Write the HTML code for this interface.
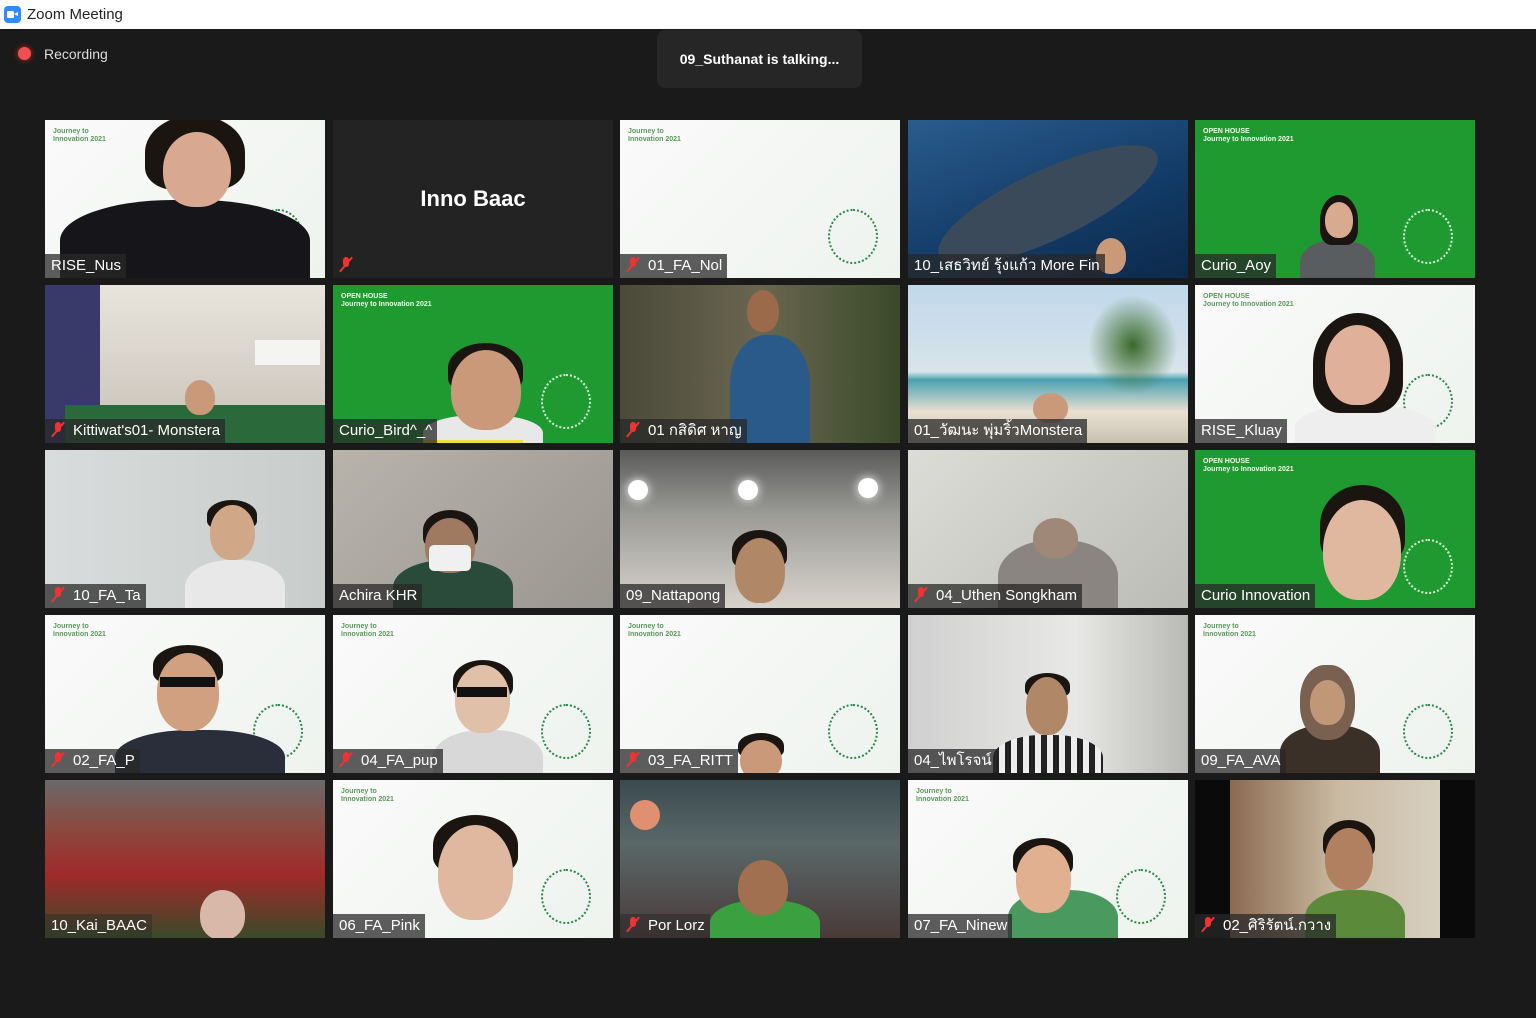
<!DOCTYPE html>
<html><head><meta charset="utf-8"><style>
*{margin:0;padding:0;box-sizing:border-box}
body{width:1536px;height:1018px;background:#1a1a1a;font-family:"Liberation Sans","Noto Sans CJK SC",sans-serif;position:relative;overflow:hidden}
.title{position:absolute;left:0;top:0;width:1536px;height:29px;background:#fff;color:#222;font-size:15px}
.title .ic{position:absolute;left:4px;top:6px;width:17px;height:17px;border-radius:4px;background:#2d8cff}
.title .ic:before{content:"";position:absolute;left:3px;top:5px;width:7px;height:7px;background:#fff;border-radius:1px}
.title .ic:after{content:"";position:absolute;left:10px;top:6px;border-right:4px solid #fff;border-top:2.5px solid transparent;border-bottom:2.5px solid transparent;height:0}
.title span{position:absolute;left:27px;top:6px}
.rec{position:absolute;left:18px;top:47px;width:13px;height:13px;border-radius:50%;background:#f05050;box-shadow:0 0 6px #c03020}
.rect{position:absolute;left:44px;top:46px;color:#ddd;font-size:14px}
.talk{position:absolute;left:657px;top:30px;width:205px;height:58px;background:#262626;border-radius:8px;color:#fff;font-weight:bold;font-size:14px;text-align:center;line-height:58px}
.t{position:absolute;width:280px;height:158px;overflow:hidden}
.w{background:linear-gradient(135deg,#fafafa,#eef3ee)}
.g{background:#1f9a30}
.lb{position:absolute;left:0;bottom:0;height:24px;background:rgba(40,40,40,.75);color:#fff;font-size:15px;line-height:24px;padding:0 5px 0 6px;white-space:nowrap}
.m{display:inline-block;width:14px;height:16px;position:relative;vertical-align:-2px;margin-right:8px}
.m:before{content:"";position:absolute;left:4px;top:1px;width:6px;height:10px;border-radius:3px;background:#e33}
.m:after{content:"";position:absolute;left:6px;top:-1px;width:2px;height:19px;background:#e33;transform:rotate(40deg)}
.hd{position:absolute;border-radius:50% 50% 45% 45%;background:#c9997a}
.hr{position:absolute;border-radius:50% 50% 30% 30%;background:#1b1512}
.bd{position:absolute;border-radius:45% 45% 0 0}
.logo{position:absolute;left:8px;top:8px;font-size:7px;font-weight:bold;color:#5a9a5a;line-height:8px}
.g .logo{color:#e8ffe8}
.bulb{position:absolute;right:22px;bottom:14px;width:50px;height:55px;border-radius:50%;border:2px dotted #2a8a4a}
.g .bulb{border-color:#d8ffd8}
</style></head><body>
<div class="title"><div class="ic"></div><span>Zoom Meeting</span></div>
<div class="rec"></div><div class="rect">Recording</div>
<div class="talk">09_Suthanat is talking...</div>

<!-- Row 1 -->
<div class="t w" style="left:45px;top:120px"><div class="logo">Journey to<br>Innovation 2021</div><div class="bulb"></div>
<div class="bd" style="left:15px;top:80px;width:250px;height:90px;background:#15151a"></div>
<div class="hr" style="left:100px;top:-5px;width:100px;height:75px"></div>
<div class="hd" style="left:118px;top:12px;width:68px;height:75px;background:#d8a890"></div>
<div class="lb">RISE_Nus</div></div>
<div class="t" style="left:333px;top:120px;background:#232323"><div style="position:absolute;width:280px;top:66px;text-align:center;color:#fff;font-weight:bold;font-size:22px">Inno Baac</div><div class="lb" style="background:none"><span class="m"></span></div></div>
<div class="t w" style="left:620px;top:120px"><div class="logo">Journey to<br>Innovation 2021</div><div class="bulb"></div><div class="lb"><span class="m"></span>01_FA_Nol</div></div>
<div class="t" style="left:908px;top:120px;background:linear-gradient(160deg,#2a5c8c,#123a66 60%,#0d2a4a)">
<div style="position:absolute;left:20px;top:50px;width:240px;height:70px;border-radius:50%;background:#3a4a5a;transform:rotate(-25deg)"></div>
<div class="hd" style="left:188px;top:118px;width:30px;height:36px"></div>
<div class="lb">10_เสธวิทย์ รุ้งแก้ว More Fin</div></div>
<div class="t g" style="left:1195px;top:120px"><div class="logo">OPEN HOUSE<br>Journey to Innovation 2021</div><div class="bulb"></div>
<div class="bd" style="left:105px;top:120px;width:75px;height:50px;background:#5a5d60"></div>
<div class="hr" style="left:125px;top:75px;width:38px;height:50px"></div>
<div class="hd" style="left:130px;top:82px;width:28px;height:36px;background:#d8aa90"></div>
<div class="lb">Curio_Aoy</div></div>

<!-- Row 2 -->
<div class="t" style="left:45px;top:285px;background:linear-gradient(180deg,#e8e4dc,#c8c2b8)">
<div style="position:absolute;left:0;top:0;width:55px;height:158px;background:#3a3a6a"></div>
<div style="position:absolute;left:20px;top:120px;width:260px;height:38px;background:#2a6a3a"></div>
<div style="position:absolute;left:210px;top:55px;width:65px;height:25px;background:#f4f4f2"></div>
<div class="hd" style="left:140px;top:95px;width:30px;height:35px"></div>
<div class="lb"><span class="m"></span>Kittiwat's01- Monstera</div></div>
<div class="t g" style="left:333px;top:285px"><div class="logo">OPEN HOUSE<br>Journey to Innovation 2021</div><div class="bulb"></div>
<div class="bd" style="left:90px;top:130px;width:120px;height:40px;background:#e8e8e8"></div>
<div class="hr" style="left:115px;top:58px;width:75px;height:50px"></div>
<div class="hd" style="left:118px;top:65px;width:70px;height:80px"></div>
<div style="position:absolute;left:90px;top:155px;width:100px;height:3px;background:#f0e040"></div>
<div class="lb">Curio_Bird^_^</div></div>
<div class="t" style="left:620px;top:285px;background:linear-gradient(90deg,#4a4a3a,#6a6650 50%,#3a4a2a)">
<div class="bd" style="left:110px;top:50px;width:80px;height:110px;background:#2a5a8a"></div>
<div class="hd" style="left:127px;top:5px;width:32px;height:42px;background:#9a6a4a"></div>
<div class="lb"><span class="m"></span>01 กสิดิศ หาญ</div></div>
<div class="t" style="left:908px;top:285px;background:linear-gradient(180deg,#bfd8ea 0%,#d8e4ea 55%,#4aa0b0 60%,#e8e0d0 80%,#c8c0b0)">
<div style="position:absolute;left:180px;top:10px;width:90px;height:100px;background:radial-gradient(#3a6a2a,transparent 70%)"></div>
<div class="hd" style="left:125px;top:108px;width:35px;height:30px"></div>
<div class="lb">01_วัฒนะ พุ่มริ้วMonstera</div></div>
<div class="t w" style="left:1195px;top:285px"><div class="logo">OPEN HOUSE<br>Journey to Innovation 2021</div><div class="bulb"></div>
<div class="bd" style="left:100px;top:120px;width:140px;height:50px;background:#eee"></div>
<div class="hr" style="left:118px;top:28px;width:90px;height:100px"></div>
<div class="hd" style="left:130px;top:40px;width:65px;height:80px;background:#e0b09a"></div>
<div class="lb">RISE_Kluay</div></div>

<!-- Row 3 -->
<div class="t" style="left:45px;top:450px;background:linear-gradient(90deg,#d8dcdc,#c8ccca)">
<div class="bd" style="left:140px;top:110px;width:100px;height:60px;background:#e8e8e8"></div>
<div class="hr" style="left:162px;top:50px;width:50px;height:30px"></div>
<div class="hd" style="left:165px;top:55px;width:45px;height:55px;background:#d0a888"></div>
<div class="lb"><span class="m"></span>10_FA_Ta</div></div>
<div class="t" style="left:333px;top:450px;background:linear-gradient(135deg,#b8b4ac,#9a9690)">
<div class="bd" style="left:60px;top:110px;width:120px;height:60px;background:#2a4a3a"></div>
<div class="hr" style="left:90px;top:60px;width:55px;height:40px"></div>
<div class="hd" style="left:92px;top:68px;width:50px;height:55px;background:#a07a60"></div>
<div style="position:absolute;left:96px;top:95px;width:42px;height:26px;background:#f0f0f0;border-radius:5px"></div>
<div class="lb">Achira KHR</div></div>
<div class="t" style="left:620px;top:450px;background:linear-gradient(180deg,#5a5a5a,#9a9a96 40%,#d8d4cc)">
<div style="position:absolute;left:8px;top:30px;width:20px;height:20px;border-radius:50%;background:#fff;box-shadow:0 0 10px #fff"></div>
<div style="position:absolute;left:118px;top:30px;width:20px;height:20px;border-radius:50%;background:#fff;box-shadow:0 0 10px #fff"></div>
<div style="position:absolute;left:238px;top:28px;width:20px;height:20px;border-radius:50%;background:#fff;box-shadow:0 0 10px #fff"></div>
<div class="hr" style="left:112px;top:80px;width:55px;height:40px"></div>
<div class="hd" style="left:115px;top:88px;width:50px;height:65px;background:#b08868"></div>
<div class="lb">09_Nattapong</div></div>
<div class="t" style="left:908px;top:450px;background:linear-gradient(135deg,#dcdcd8,#bcbcb6)">
<div class="bd" style="left:90px;top:90px;width:120px;height:80px;background:#8a8580"></div>
<div class="hd" style="left:125px;top:68px;width:45px;height:40px;background:#a08878"></div>
<div class="lb"><span class="m"></span>04_Uthen Songkham</div></div>
<div class="t g" style="left:1195px;top:450px"><div class="logo">OPEN HOUSE<br>Journey to Innovation 2021</div><div class="bulb"></div>
<div class="hr" style="left:125px;top:35px;width:85px;height:80px"></div>
<div class="hd" style="left:128px;top:50px;width:78px;height:100px;background:#e0b8a0"></div>
<div class="lb">Curio Innovation</div></div>

<!-- Row 4 -->
<div class="t w" style="left:620px;top:615px"><div class="logo">Journey to<br>Innovation 2021</div><div class="bulb"></div>
<div class="hr" style="left:118px;top:118px;width:46px;height:25px"></div>
<div class="hd" style="left:120px;top:125px;width:42px;height:40px"></div>
<div class="lb"><span class="m"></span>03_FA_RITT</div></div>
<div class="t w" style="left:45px;top:615px"><div class="logo">Journey to<br>Innovation 2021</div><div class="bulb"></div>
<div class="bd" style="left:70px;top:115px;width:170px;height:60px;background:#2a2e3a"></div>
<div class="hr" style="left:108px;top:30px;width:70px;height:40px"></div>
<div class="hd" style="left:112px;top:38px;width:62px;height:78px;background:#d0a080"></div>
<div style="position:absolute;left:115px;top:62px;width:55px;height:10px;background:#111"></div>
<div class="lb"><span class="m"></span>02_FA_P</div></div>
<div class="t w" style="left:333px;top:615px"><div class="logo">Journey to<br>Innovation 2021</div><div class="bulb"></div>
<div class="bd" style="left:100px;top:115px;width:110px;height:60px;background:#d8d8d8"></div>
<div class="hr" style="left:120px;top:45px;width:60px;height:40px"></div>
<div class="hd" style="left:122px;top:50px;width:55px;height:68px;background:#e0c0a8"></div>
<div style="position:absolute;left:124px;top:72px;width:50px;height:10px;background:#111"></div>
<div class="lb"><span class="m"></span>04_FA_pup</div></div>
<div class="t" style="left:908px;top:615px;background:linear-gradient(90deg,#d0d0d0,#e8e8e6 60%,#b8b8b4)">
<div class="bd" style="left:85px;top:120px;width:110px;height:50px;background:repeating-linear-gradient(90deg,#222 0 6px,#eee 6px 12px)"></div>
<div class="hr" style="left:117px;top:58px;width:45px;height:25px"></div>
<div class="hd" style="left:118px;top:62px;width:42px;height:58px;background:#b08868"></div>
<div class="lb">04_ไพโรจน์</div></div>
<div class="t w" style="left:1195px;top:615px"><div class="logo">Journey to<br>Innovation 2021</div><div class="bulb"></div>
<div class="bd" style="left:85px;top:110px;width:100px;height:60px;background:#3a3028"></div>
<div class="hd" style="left:105px;top:50px;width:55px;height:75px;background:#7a6050;border-radius:45%"></div>
<div class="hd" style="left:115px;top:65px;width:35px;height:45px;background:#c09878"></div>
<div class="lb">09_FA_AVA</div></div>

<!-- Row 5 -->
<div class="t" style="left:45px;top:780px;background:linear-gradient(180deg,#6a6a6a 0%,#8a4a40 30%,#a02a2a 60%,#3a4a2a)">
<div class="hd" style="left:155px;top:110px;width:45px;height:50px;background:#d8b8a8"></div>
<div class="lb" style="background:rgba(40,40,40,.4)">10_Kai_BAAC</div></div>
<div class="t w" style="left:333px;top:780px"><div class="logo">Journey to<br>Innovation 2021</div><div class="bulb"></div>
<div class="hr" style="left:100px;top:35px;width:85px;height:60px"></div>
<div class="hd" style="left:105px;top:45px;width:75px;height:95px;background:#e0b8a0"></div>
<div class="lb">06_FA_Pink</div></div>
<div class="t" style="left:620px;top:780px;background:linear-gradient(180deg,#3a4a50,#5a6868 40%,#4a3a3a)">
<div style="position:absolute;left:10px;top:20px;width:30px;height:30px;border-radius:50%;background:#e09070"></div>
<div class="bd" style="left:90px;top:120px;width:110px;height:50px;background:#3aa040"></div>
<div class="hd" style="left:118px;top:80px;width:50px;height:55px;background:#a07050"></div>
<div class="lb" style="background:rgba(40,40,40,.5)"><span class="m"></span>Por Lorz</div></div>
<div class="t w" style="left:908px;top:780px"><div class="logo">Journey to<br>Innovation 2021</div><div class="bulb"></div>
<div class="bd" style="left:100px;top:110px;width:110px;height:60px;background:#4a9a60"></div>
<div class="hr" style="left:105px;top:58px;width:60px;height:40px"></div>
<div class="hd" style="left:108px;top:65px;width:55px;height:68px;background:#e0b090"></div>
<div class="lb">07_FA_Ninew</div></div>
<div class="t" style="left:1195px;top:780px;background:#0a0a0a">
<div style="position:absolute;left:35px;top:0;width:210px;height:158px;background:linear-gradient(90deg,#8a6a50,#c8b8a0 50%,#d8d0c0)"></div>
<div class="bd" style="left:110px;top:110px;width:100px;height:60px;background:#5a8a3a"></div>
<div class="hr" style="left:128px;top:40px;width:52px;height:40px"></div>
<div class="hd" style="left:130px;top:48px;width:48px;height:62px;background:#b08060"></div>
<div class="lb"><span class="m"></span>02_ศิริรัตน์.กวาง</div></div>
</body></html>
